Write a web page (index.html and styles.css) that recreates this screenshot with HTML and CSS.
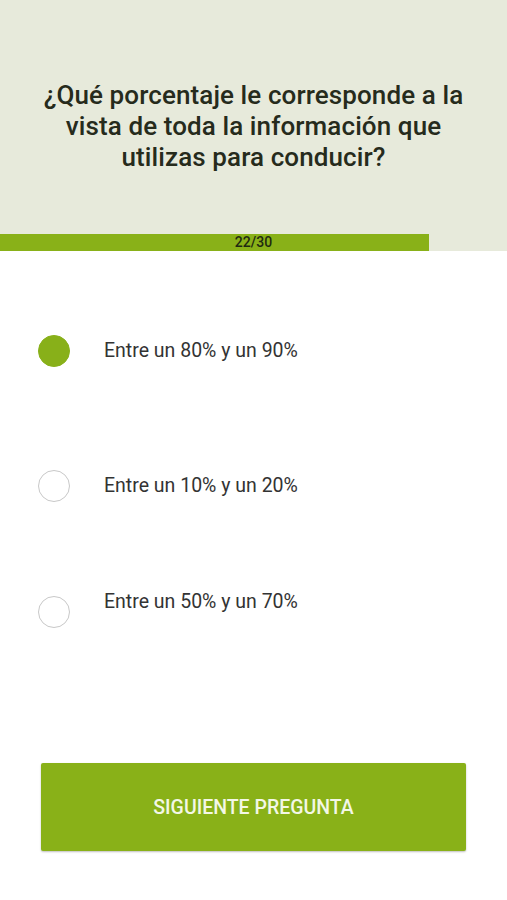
FILE: index.html
```html
<!DOCTYPE html>
<html lang="es">
<head>
<meta charset="utf-8">
<link rel="stylesheet" href="styles.css">
</head>
<body>
<div class="screen">
  <header class="header">
    <h1 class="question">¿Qué porcentaje le corresponde a la vista de toda la información que utilizas para conducir?</h1>
    <div class="progress">
      <div class="progress-fill" style="width:429px"></div>
      <span class="progress-label">22/30</span>
    </div>
  </header>
  <main class="options">
    <div class="option opt1">
      <span class="radio checked"></span>
      <span class="label">Entre un 80% y un 90%</span>
    </div>
    <div class="option opt2">
      <span class="radio"></span>
      <span class="label">Entre un 10% y un 20%</span>
    </div>
    <div class="option opt3">
      <span class="radio"></span>
      <span class="label">Entre un 50% y un 70%</span>
    </div>
  </main>
  <div class="footer">
    <button class="next">SIGUIENTE PREGUNTA</button>
  </div>
</div>
</body>
</html>
```

FILE: styles.css
```css
* { box-sizing: border-box; }
html, body { margin: 0; padding: 0; background: #ffffff; }
body { font-family: Roboto, "Noto Sans", sans-serif; width: 507px; height: 900px; overflow: hidden; }
.screen { display: flex; flex-direction: column; height: 900px; }
.header { background: #e7eadb; padding-top: 80px; }
.question {
  margin: 0 auto;
  width: 440px;
  text-align: center;
  font-size: 26px;
  line-height: 31px;
  font-weight: 500;
  color: #262b1c;
  letter-spacing: 0.1px;
}
.progress { position: relative; margin-top: 61px; height: 17px; }
.progress-fill { height: 17px; background: #89b118; }
.progress-label {
  position: absolute; left: 0; right: 0; top: 0;
  text-align: center; font-size: 14px; line-height: 17px; font-weight: 500; color: #1f2a10;
}
.options { display: flex; flex-direction: column; padding-left: 38px; }
.option { display: flex; align-items: center; gap: 34px; }
.opt1 { margin-top: 84px; }
.opt2 { margin-top: 103px; }
.opt3 { margin-top: 94px; }
.opt3 .label { position: relative; top: -10px; }
.radio { width: 32px; height: 32px; border-radius: 50%; border: 1.5px solid #c8c8c8; background: #fff; flex: none; }
.radio.checked { background: #88b019; border-color: #88b019; }
.label { font-size: 19.5px; color: #333333; line-height: 32px; }
.footer { margin-top: auto; padding: 0 41px 49px 41px; }
.next {
  display: block; width: 425px; height: 88px;
  background: #89b118; border: none; border-radius: 2px;
  box-shadow: 0 1px 2px rgba(0,0,0,0.25);
  color: #f3f7e6; font-family: Roboto, sans-serif; font-size: 19.5px; font-weight: 500;
}
```
